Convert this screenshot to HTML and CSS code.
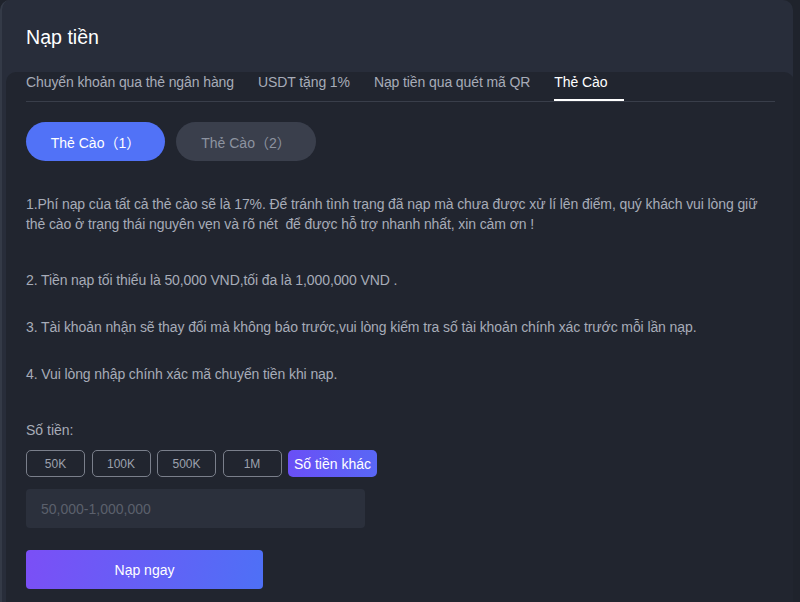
FILE: index.html
```html
<!DOCTYPE html>
<html lang="vi">
<head>
<meta charset="utf-8">
<title>Nạp tiền</title>
<link rel="stylesheet" href="styles.css">
</head>
<body>
<div class="panel">
  <h1 class="title">Nạp tiền</h1>
  <div class="inner">
    <nav class="tabs">
      <span class="tab">Chuyển khoản qua thẻ ngân hàng</span>
      <span class="tab">USDT tặng 1%</span>
      <span class="tab">Nạp tiền qua quét mã QR</span>
      <span class="tab active">Thẻ Cào</span>
    </nav>
    <div class="pills">
      <span class="pill active">Thẻ Cào（1）</span>
      <span class="pill">Thẻ Cào（2）</span>
    </div>
    <div class="notes">
      <p class="note first">1.Phí nạp của tất cả thẻ cào sẽ là 17%. Để tránh tình trạng đã nạp mà chưa được xử lí lên điểm, quý khách vui lòng giữ thẻ cào ở trạng thái nguyên vẹn và rõ nét&nbsp; để được hỗ trợ nhanh nhất, xin cảm ơn !</p>
      <p class="note">2. Tiền nạp tối thiểu là 50,000 VND,tối đa là 1,000,000 VND .</p>
      <p class="note">3. Tài khoản nhận sẽ thay đổi mà không báo trước,vui lòng kiểm tra số tài khoản chính xác trước mỗi lần nạp.</p>
      <p class="note">4. Vui lòng nhập chính xác mã chuyển tiền khi nạp.</p>
    </div>
    <div class="label">Số tiền:</div>
    <div class="amounts">
      <span class="amt">50K</span>
      <span class="amt">100K</span>
      <span class="amt">500K</span>
      <span class="amt">1M</span>
      <span class="amt other">Số tiền khác</span>
    </div>
    <input class="field" type="text" placeholder="50,000-1,000,000">
    <button class="submit" type="button">Nạp ngay</button>
  </div>
</div>
</body>
</html>
```
FILE: styles.css
```css
html, body {
  margin: 0;
  padding: 0;
  background: #1f232c;
  height: 602px;
  overflow: hidden;
}
body {
  font-family: "Liberation Sans", Arial, "Noto Sans CJK SC", sans-serif;
  font-size: 14px;
}
.panel {
  width: 793px;
  height: 602px;
  background: #282d3a;
  border-left: 2px solid #343a47;
  border-radius: 10px 10px 0 0;
  padding: 0 0 0 4px;
  box-sizing: border-box;
  overflow: hidden;
}
.title {
  margin: 0;
  padding: 26px 0 0 20px;
  height: 72px;
  box-sizing: border-box;
  font-size: 19.6px;
  font-weight: normal;
  line-height: 22px;
  color: #ffffff;
}
.inner {
  width: 788px;
  height: 530px;
  background: #21252f;
  border-radius: 10px 10px 0 0;
  padding: 0 19px 0 20px;
  box-sizing: border-box;
}
.tabs {
  display: flex;
  gap: 24px;
  border-bottom: 1px solid #393e4a;
  height: 29px;
  letter-spacing: -0.1px;
}
.tab {
  color: #a7acb8;
  line-height: 20px;
  height: 27px;
  border-bottom: 2px solid transparent;
}
.tab.active {
  color: #ffffff;
  border-bottom-color: #ffffff;
  width: 70px;
}
.pills {
  display: flex;
  gap: 11px;
  margin-top: 20px;
}
.pill {
  width: 139px;
  height: 39px;
  border-radius: 20px;
  background: #3a3f4c;
  color: #8d93a0;
  display: flex;
  align-items: center;
  justify-content: center;
}
.pill + .pill {
  width: 140px;
}
.pill.active {
  background: #5172f7;
  color: #ffffff;
}
.notes {
  margin-top: 33px;
  letter-spacing: -0.1px;
}
.note {
  margin: 27px 0 0;
  line-height: 20px;
  color: #a7acb8;
}
.note.first {
  margin: 0 0 36px;
}
.note.first + .note {
  margin-top: 0;
}
.label {
  margin-top: 36px;
  line-height: 20px;
  color: #a7acb8;
}
.amounts {
  display: flex;
  gap: 6.5px;
  margin-top: 10px;
}
.amt {
  width: 59px;
  height: 27px;
  box-sizing: border-box;
  border: 1px solid #7a7f8b;
  border-radius: 5px;
  color: #9ca1ad;
  font-size: 12px;
  display: flex;
  align-items: center;
  justify-content: center;
}
.amt.other {
  width: 89px;
  border: none;
  color: #ffffff;
  font-size: 14px;
  background: linear-gradient(90deg, #6a4ff6, #5967f5);
}
.field {
  display: block;
  margin-top: 12px;
  width: 339px;
  height: 39px;
  box-sizing: border-box;
  border: none;
  border-radius: 4px;
  background: #2b303c;
  padding: 0 15px;
  font-family: inherit;
  font-size: 14px;
  color: #ffffff;
  outline: none;
}
.field::placeholder {
  color: #5b606c;
}
.submit {
  display: block;
  margin-top: 22px;
  width: 237px;
  height: 39px;
  border: none;
  border-radius: 4px;
  background: linear-gradient(100deg, #7b4ff6, #4e70f6);
  color: #ffffff;
  font-family: inherit;
  font-size: 14px;
}
```
